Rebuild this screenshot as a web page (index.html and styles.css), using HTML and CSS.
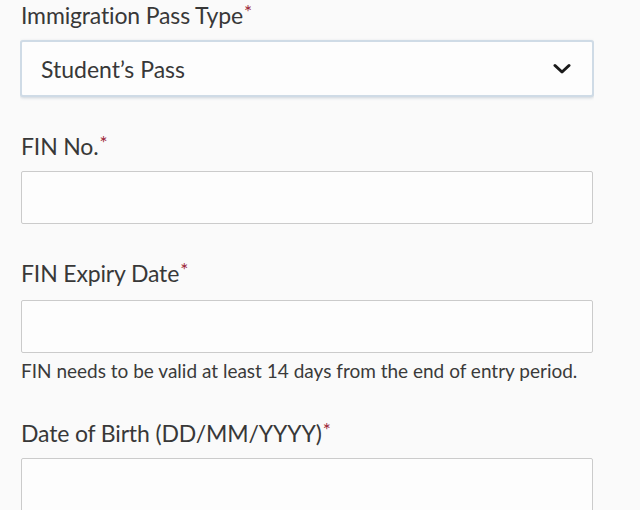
FILE: index.html
```html
<!DOCTYPE html>
<html lang="en">
<head>
<meta charset="utf-8">
<link rel="stylesheet" href="styles.css">
</head>
<body>
<form class="form">
  <div class="field">
    <label class="label">Immigration Pass Type<span class="req">*</span></label>
    <div class="select">
      <span class="select-value">Student’s Pass</span>
      <svg class="chevron" width="18" height="12" viewBox="0 0 18 12"><path d="M2 2.5 L9 9 L16 2.5" fill="none" stroke="#1a1a1a" stroke-width="3" stroke-linecap="round" stroke-linejoin="round"/></svg>
    </div>
  </div>
  <div class="field">
    <label class="label">FIN No.<span class="req">*</span></label>
    <input class="input" type="text">
  </div>
  <div class="field field-help">
    <label class="label">FIN Expiry Date<span class="req">*</span></label>
    <input class="input" type="text">
    <p class="help">FIN needs to be valid at least 14 days from the end of entry period.</p>
  </div>
  <div class="field">
    <label class="label">Date of Birth (DD/MM/YYYY)<span class="req">*</span></label>
    <input class="input input-tall" type="text">
  </div>
</form>
</body>
</html>
```
FILE: styles.css
```css
html, body {
  margin: 0;
  padding: 0;
  background: #fafafa;
  overflow: hidden;
}
body {
  font-family: Lato, "Open Sans", sans-serif;
  color: #333;
  width: 640px;
  height: 510px;
}
.form {
  margin: 0 0 0 20px;
  width: 574px;
  height: 510px;
  overflow: hidden;
  display: flex;
  flex-direction: column;
  gap: 34px;
}
.field {
  display: flex;
  flex-direction: column;
  flex-shrink: 0;
}
.label {
  font-size: 23px;
  letter-spacing: -0.15px;
  line-height: 30px;
  margin: 0 0 10px 1px;
  color: #383838;
}
.field-help .label {
  margin-bottom: 12px;
}
.req {
  color: #9b2335;
  font-size: 19px;
  vertical-align: top;
  line-height: 24px;
  margin-left: 1px;
}
.select {
  box-sizing: border-box;
  height: 57px;
  border: 2px solid #cfdbe6;
  border-radius: 3px;
  background: #fdfdfd;
  box-shadow: 0 1px 3px rgba(120, 140, 160, 0.35);
  display: flex;
  align-items: center;
  justify-content: space-between;
  padding: 0 21px 0 19px;
}
.select-value {
  font-size: 23px;
  color: #383838;
}
.chevron {
  display: block;
}
.input {
  box-sizing: border-box;
  height: 53px;
  margin: 0 1px;
  border: 1px solid #cbcbcb;
  border-radius: 2px;
  background: #fdfdfd;
  font: inherit;
}
.input-tall {
  height: 80px;
}
.help {
  margin: 7px 0 2px 1px;
  font-size: 19px;
  line-height: 22px;
  color: #3a3a3a;
}
```
